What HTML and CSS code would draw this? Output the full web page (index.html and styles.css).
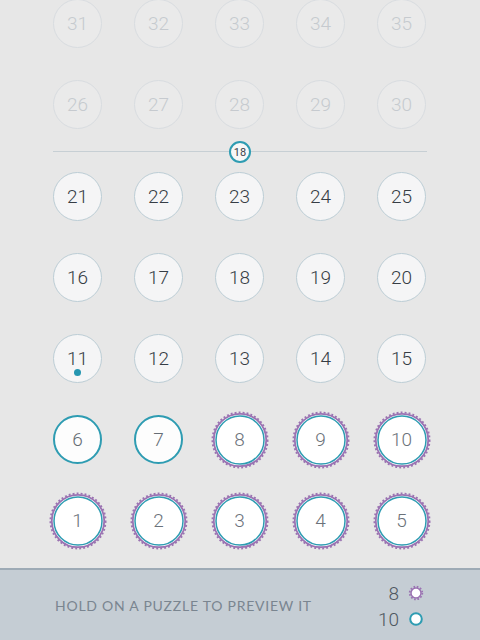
FILE: index.html
```html
<!DOCTYPE html>
<html>
<head>
<meta charset="utf-8">
<link rel="stylesheet" href="styles.css">
</head>
<body>
<div class="page">
  <main class="levels">
    <div class="grid">
      <div class="cell"><span class="dot faded">31</span></div>
      <div class="cell"><span class="dot faded">32</span></div>
      <div class="cell"><span class="dot faded">33</span></div>
      <div class="cell"><span class="dot faded">34</span></div>
      <div class="cell"><span class="dot faded">35</span></div>
      <div class="cell"><span class="dot faded">26</span></div>
      <div class="cell"><span class="dot faded">27</span></div>
      <div class="cell"><span class="dot faded">28</span></div>
      <div class="cell"><span class="dot faded">29</span></div>
      <div class="cell"><span class="dot faded">30</span></div>
    </div>
    <div class="divider"><span class="divider-badge">18</span></div>
    <div class="grid">
      <div class="cell"><span class="dot open">21</span></div>
      <div class="cell"><span class="dot open">22</span></div>
      <div class="cell"><span class="dot open">23</span></div>
      <div class="cell"><span class="dot open">24</span></div>
      <div class="cell"><span class="dot open">25</span></div>
      <div class="cell"><span class="dot open">16</span></div>
      <div class="cell"><span class="dot open">17</span></div>
      <div class="cell"><span class="dot open">18</span></div>
      <div class="cell"><span class="dot open">19</span></div>
      <div class="cell"><span class="dot open">20</span></div>
      <div class="cell"><span class="dot open current">11<i class="pip"></i></span></div>
      <div class="cell"><span class="dot open">12</span></div>
      <div class="cell"><span class="dot open">13</span></div>
      <div class="cell"><span class="dot open">14</span></div>
      <div class="cell"><span class="dot open">15</span></div>
      <div class="cell"><span class="dot solved">6</span></div>
      <div class="cell"><span class="dot solved">7</span></div>
      <div class="cell"><span class="seal"><svg class="seal-art" viewBox="0 0 60 60"><circle cx="30" cy="30" r="27.5" fill="none" stroke="#9b73b2" stroke-width="2" stroke-dasharray="1.9 2.1"/><circle cx="30" cy="30" r="26.2" fill="#ffffff" stroke="#9b73b2" stroke-width="1.8"/><circle cx="30" cy="30" r="24" fill="#ffffff" stroke="#2e9cb2" stroke-width="1.5"/></svg><span class="seal-num">8</span></span></div>
      <div class="cell"><span class="seal"><svg class="seal-art" viewBox="0 0 60 60"><circle cx="30" cy="30" r="27.5" fill="none" stroke="#9b73b2" stroke-width="2" stroke-dasharray="1.9 2.1"/><circle cx="30" cy="30" r="26.2" fill="#ffffff" stroke="#9b73b2" stroke-width="1.8"/><circle cx="30" cy="30" r="24" fill="#ffffff" stroke="#2e9cb2" stroke-width="1.5"/></svg><span class="seal-num">9</span></span></div>
      <div class="cell"><span class="seal"><svg class="seal-art" viewBox="0 0 60 60"><circle cx="30" cy="30" r="27.5" fill="none" stroke="#9b73b2" stroke-width="2" stroke-dasharray="1.9 2.1"/><circle cx="30" cy="30" r="26.2" fill="#ffffff" stroke="#9b73b2" stroke-width="1.8"/><circle cx="30" cy="30" r="24" fill="#ffffff" stroke="#2e9cb2" stroke-width="1.5"/></svg><span class="seal-num">10</span></span></div>
      <div class="cell"><span class="seal"><svg class="seal-art" viewBox="0 0 60 60"><circle cx="30" cy="30" r="27.5" fill="none" stroke="#9b73b2" stroke-width="2" stroke-dasharray="1.9 2.1"/><circle cx="30" cy="30" r="26.2" fill="#ffffff" stroke="#9b73b2" stroke-width="1.8"/><circle cx="30" cy="30" r="24" fill="#ffffff" stroke="#2e9cb2" stroke-width="1.5"/></svg><span class="seal-num">1</span></span></div>
      <div class="cell"><span class="seal"><svg class="seal-art" viewBox="0 0 60 60"><circle cx="30" cy="30" r="27.5" fill="none" stroke="#9b73b2" stroke-width="2" stroke-dasharray="1.9 2.1"/><circle cx="30" cy="30" r="26.2" fill="#ffffff" stroke="#9b73b2" stroke-width="1.8"/><circle cx="30" cy="30" r="24" fill="#ffffff" stroke="#2e9cb2" stroke-width="1.5"/></svg><span class="seal-num">2</span></span></div>
      <div class="cell"><span class="seal"><svg class="seal-art" viewBox="0 0 60 60"><circle cx="30" cy="30" r="27.5" fill="none" stroke="#9b73b2" stroke-width="2" stroke-dasharray="1.9 2.1"/><circle cx="30" cy="30" r="26.2" fill="#ffffff" stroke="#9b73b2" stroke-width="1.8"/><circle cx="30" cy="30" r="24" fill="#ffffff" stroke="#2e9cb2" stroke-width="1.5"/></svg><span class="seal-num">3</span></span></div>
      <div class="cell"><span class="seal"><svg class="seal-art" viewBox="0 0 60 60"><circle cx="30" cy="30" r="27.5" fill="none" stroke="#9b73b2" stroke-width="2" stroke-dasharray="1.9 2.1"/><circle cx="30" cy="30" r="26.2" fill="#ffffff" stroke="#9b73b2" stroke-width="1.8"/><circle cx="30" cy="30" r="24" fill="#ffffff" stroke="#2e9cb2" stroke-width="1.5"/></svg><span class="seal-num">4</span></span></div>
      <div class="cell"><span class="seal"><svg class="seal-art" viewBox="0 0 60 60"><circle cx="30" cy="30" r="27.5" fill="none" stroke="#9b73b2" stroke-width="2" stroke-dasharray="1.9 2.1"/><circle cx="30" cy="30" r="26.2" fill="#ffffff" stroke="#9b73b2" stroke-width="1.8"/><circle cx="30" cy="30" r="24" fill="#ffffff" stroke="#2e9cb2" stroke-width="1.5"/></svg><span class="seal-num">5</span></span></div>
    </div>
  </main>
  <footer class="footer">
    <p class="hint">HOLD ON A PUZZLE TO PREVIEW IT</p>
    <div class="legend">
      <div class="legend-row"><span class="legend-num">8</span><svg class="legend-icon" viewBox="0 0 16 16"><circle cx="8" cy="8" r="6.3" fill="none" stroke="#9b73b2" stroke-width="1.8" stroke-dasharray="1.65 1.65"/><circle cx="8" cy="8" r="5" fill="#ffffff" stroke="#9b73b2" stroke-width="1.5"/></svg></div>
      <div class="legend-row"><span class="legend-num">10</span><svg class="legend-icon" viewBox="0 0 16 16"><circle cx="8" cy="8" r="5.8" fill="#ffffff" stroke="#2e9cb2" stroke-width="2"/></svg></div>
    </div>
  </footer>
</div>
</body>
</html>
```

FILE: styles.css
```css
* { box-sizing: border-box; }
html, body { margin: 0; padding: 0; }
body {
  width: 480px;
  height: 640px;
  overflow: hidden;
  background: #e7e7e7;
  font-family: Roboto, "Liberation Sans", sans-serif;
}
.page {
  display: flex;
  flex-direction: column;
  height: 640px;
}
.levels {
  flex: 1;
  overflow: hidden;
  padding: 0 38px 0 37px;
}
.grid {
  display: grid;
  grid-template-columns: repeat(5, 81px);
  grid-auto-rows: 81px;
}
.levels > .grid:first-child { margin-top: -17px; }
.cell {
  display: flex;
  align-items: center;
  justify-content: center;
}
.dot {
  position: relative;
  width: 49px;
  height: 49px;
  border-radius: 50%;
  display: flex;
  align-items: center;
  justify-content: center;
  font-size: 19px;
  font-weight: 300;
  line-height: 1;
}
.faded {
  background: #eaeaea;
  border: 1.5px solid #d8dce0;
  color: #c6cacf;
}
.open {
  background: #f5f5f6;
  border: 1.5px solid #bccdd5;
  color: #363d45;
}
.solved {
  background: #fdfdfd;
  border: 2px solid #2e9cb2;
  color: #666d75;
}
.pip {
  position: absolute;
  left: 50%;
  top: 34px;
  width: 7px;
  height: 7px;
  margin-left: -3.5px;
  border-radius: 50%;
  background: #2596b0;
}
.divider {
  position: relative;
  height: 12px;
  margin: 0 15px 0 16px;
  border-bottom: 1px solid #c7cfd4;
  margin-bottom: -1px;
  transform: translateY(-5px);
}
.divider-badge {
  position: absolute;
  left: 50%;
  top: 12px;
  width: 22px;
  height: 22px;
  margin: -11px 0 0 -11px;
  border-radius: 50%;
  background: #f7f7f7;
  border: 2px solid #2e9cb2;
  color: #3a4149;
  font-size: 11px;
  display: flex;
  align-items: center;
  justify-content: center;
}
.seal {
  position: relative;
  width: 60px;
  height: 60px;
  display: flex;
  align-items: center;
  justify-content: center;
}
.seal-art {
  position: absolute;
  inset: 0;
  width: 60px;
  height: 60px;
}
.seal-num {
  position: relative;
  font-size: 19px;
  font-weight: 300;
  line-height: 1;
  color: #6b727a;
}
.footer {
  flex: 0 0 72px;
  background: #c5cdd4;
  border-top: 2px solid #9eabb6;
  display: flex;
  align-items: center;
  justify-content: space-between;
  padding: 0 56px 0 55px;
}
.hint {
  margin: 0;
  font-family: Lato, "Liberation Sans", sans-serif;
  font-size: 14px;
  font-weight: 400;
  letter-spacing: 0.75px;
  color: #7a8590;
}
.legend {
  display: flex;
  flex-direction: column;
  align-items: flex-end;
  gap: 4px;
  margin-top: 2px;
}
.legend-row {
  display: flex;
  align-items: center;
  gap: 9px;
  height: 22px;
}
.legend-num {
  font-size: 19px;
  font-weight: 300;
  color: #4e5760;
  line-height: 1;
}
.legend-icon {
  width: 16px;
  height: 16px;
}
```
